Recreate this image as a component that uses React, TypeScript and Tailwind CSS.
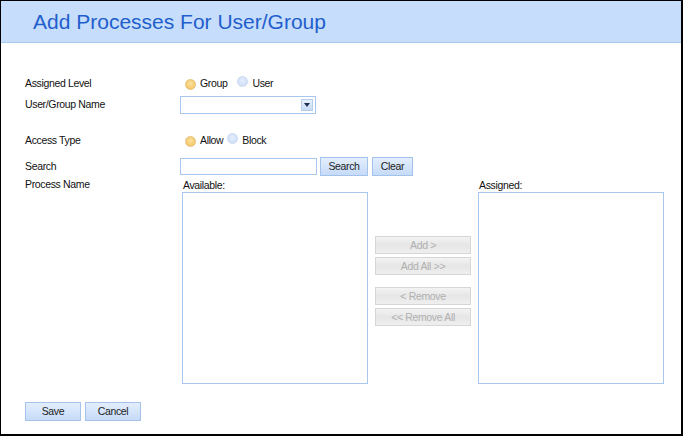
import React from "react";

const font = { fontFamily: "Tahoma, 'Liberation Sans', 'DejaVu Sans', sans-serif" };

function Radio({ checked }: { checked?: boolean }) {
  return (
    <span
      className={
        "inline-block w-[11px] h-[11px] rounded-full border " +
        (checked
          ? "border-[#e6c27a] bg-[radial-gradient(circle_at_50%_40%,#fbe3a0,#f2bd55)]"
          : "border-[#c9dbf3] bg-[radial-gradient(circle_at_50%_40%,#e6effc,#c7daf5)]")
      }
    />
  );
}

function BlueButton({ children, className = "" }: { children: React.ReactNode; className?: string }) {
  return (
    <button
      className={
        "h-[19px] border border-[#a3c2ec] bg-gradient-to-b from-[#e3eefd] to-[#c6dbf8] text-[#222] leading-none " +
        className
      }
    >
      {children}
    </button>
  );
}

function GrayButton({ children }: { children: React.ReactNode }) {
  return (
    <button className="w-[96px] h-[18px] border border-[#d6d6d6] bg-gradient-to-b from-[#f3f3f3] via-[#e6e6e6] to-[#efefef] text-[#b0b0b0] leading-none">
      {children}
    </button>
  );
}

export default function App() {
  return (
    <div
      style={font}
      className="w-[683px] h-[436px] border-l border-t border-r-2 border-b-2 border-black bg-white text-[10.5px] tracking-[-0.35px] text-[#111] overflow-hidden"
    >
      {/* header */}
      <div className="h-[42px] bg-[#c7ddfc] border-b border-[#a9c9ef] flex items-center pl-[32px] tracking-normal">
        <h1 className="text-[21px] text-[#1f5fcc] leading-none">Add Processes For User/Group</h1>
      </div>

      <div className="pl-[24px]">
        <div className="flex items-center h-[18px] mt-[32px]">
          <span className="w-[155px]">Assigned Level</span>
          <div className="flex items-center ml-[5px]">
            <Radio checked />
            <span className="ml-[4px]">Group</span>
            <span className="ml-[10px]"><Radio /></span>
            <span className="ml-[4px]">User</span>
          </div>
        </div>

        <div className="flex items-center h-[18px] mt-[3px]">
          <span className="w-[155px]">User/Group Name</span>
          <div className="w-[136px] h-[18px] border border-[#a9c6ee] bg-white flex items-center justify-end pr-[2px]">
            <span className="w-[12px] h-[12px] bg-gradient-to-b from-[#e8f0fc] to-[#c9dbf5] border border-[#b7cdec] flex items-center justify-center">
              <svg width="6" height="4" viewBox="0 0 6 4">
                <path d="M0 0h6L3 4z" fill="#1c2f55" />
              </svg>
            </span>
          </div>
        </div>

        <div className="flex items-center h-[18px] mt-[18px]">
          <span className="w-[155px]">Access Type</span>
          <div className="flex items-center ml-[5px]">
            <Radio checked />
            <span className="ml-[4px]">Allow</span>
            <span className="ml-[4px]"><Radio /></span>
            <span className="ml-[4px]">Block</span>
          </div>
        </div>

        <div className="flex items-center h-[19px] mt-[7px]">
          <span className="w-[155px]">Search</span>
          <input className="w-[137px] h-[17px] border border-[#a9c6ee] bg-white outline-none" />
          <BlueButton className="w-[48px] ml-[3px]">Search</BlueButton>
          <BlueButton className="w-[41px] ml-[4px]">Clear</BlueButton>
        </div>

        <div className="flex mt-[2px]">
          <span className="w-[155px] leading-[13px]">Process Name</span>
          <div className="ml-[2px] w-[186px]">
            <div className="h-[13px] leading-[13px] mt-[1px] pl-[1px]">Available:</div>
            <div className="h-[192px] border border-[#a9c6ee]" />
          </div>
          <div className="ml-[7px] pt-[58px] flex flex-col gap-[3px]">
            <GrayButton>Add &gt;</GrayButton>
            <GrayButton>Add All &gt;&gt;</GrayButton>
            <div className="h-[6px]" />
            <GrayButton>&lt; Remove</GrayButton>
            <GrayButton>&lt;&lt; Remove All</GrayButton>
          </div>
          <div className="ml-[7px] w-[186px]">
            <div className="h-[13px] leading-[13px] mt-[1px] pl-[1px]">Assigned:</div>
            <div className="h-[192px] border border-[#a9c6ee]" />
          </div>
        </div>

        <div className="flex gap-[4px] mt-[18px]">
          <BlueButton className="w-[56px]">Save</BlueButton>
          <BlueButton className="w-[56px]">Cancel</BlueButton>
        </div>
      </div>
    </div>
  );
}
